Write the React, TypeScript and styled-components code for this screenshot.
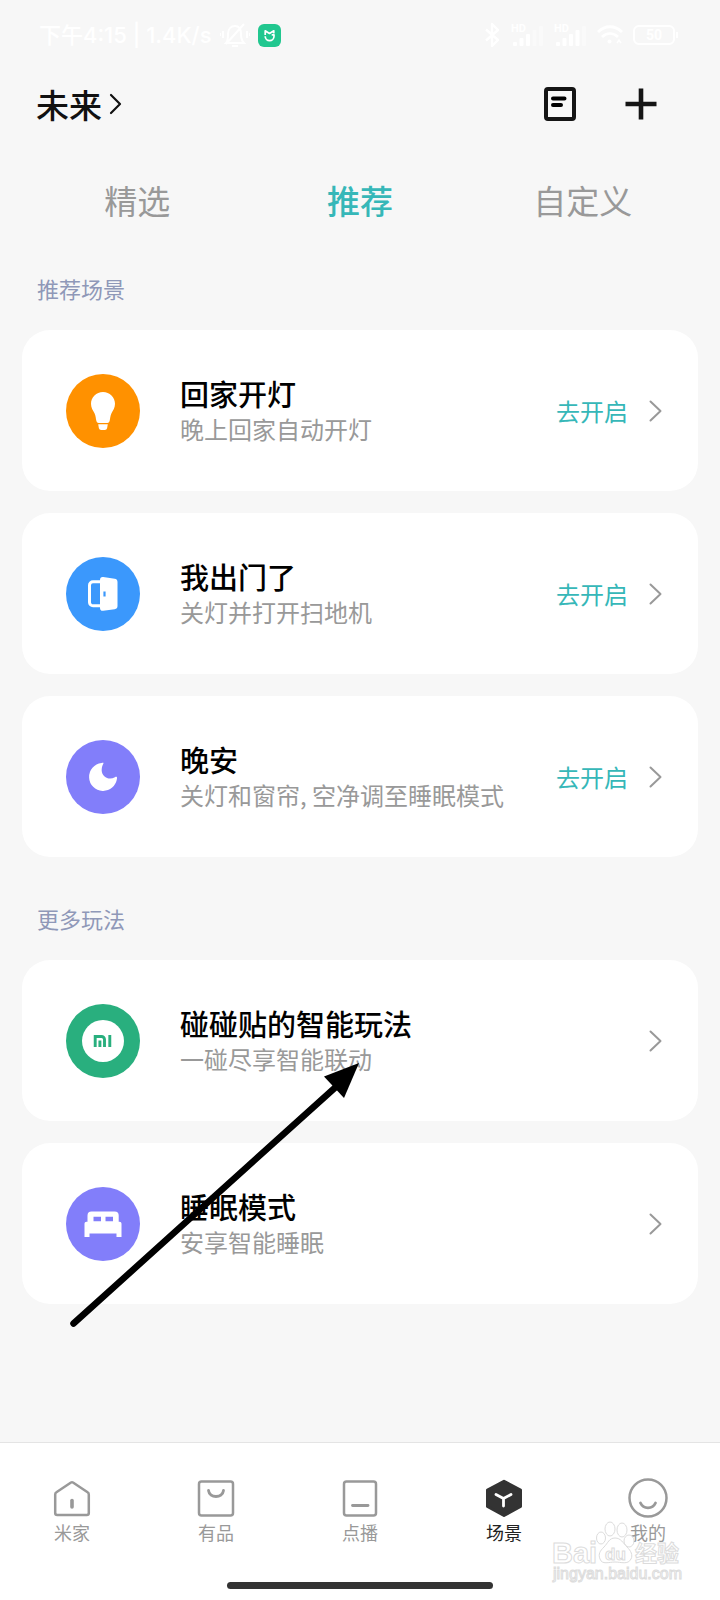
import React from "react";
import styled, { createGlobalStyle } from "styled-components";

const GlobalStyle = createGlobalStyle`
  * { box-sizing: border-box; }
  body {
    margin: 0;
    background: #f7f7f7;
    font-family: "Noto Sans CJK SC", sans-serif;
  }
  button { font: inherit; color: inherit; background: none; border: 0; padding: 0; cursor: pointer; }
  a { color: inherit; text-decoration: none; }
  svg { display: block; flex: none; }
`;

const Page = styled.div`
  min-height: 100vh;
  display: flex;
  flex-direction: column;
`;

const StatusBar = styled.div`
  height: 70px;
  padding: 0 41px 0 39px;
  display: flex;
  align-items: center;
  justify-content: space-between;
  color: #fff;
  font-size: 22px;
`;

const StatusGroup = styled.div<{ $gap: number }>`
  display: flex;
  align-items: center;
  gap: ${(p) => p.$gap}px;
`;

const StatusText = styled.span`
  font-family: Inter, "Noto Sans CJK SC", sans-serif;
  font-weight: 500;
  line-height: 30px;
  white-space: nowrap;
`;

const Header = styled.header`
  height: 68px;
  padding: 0 63px 0 36px;
  display: flex;
  align-items: center;
  justify-content: space-between;
`;

const HomeButton = styled.button`
  display: flex;
  align-items: center;
  gap: 7px;
  color: #111;
  font-size: 33px;
  font-weight: 500;
  line-height: 40px;
`;

const HeaderActions = styled.div`
  display: flex;
  align-items: center;
  gap: 49px;
`;

const Tabs = styled.nav`
  display: flex;
  padding: 37px 26px 2px;
`;

const Tab = styled.button<{ $active?: boolean }>`
  flex: 1;
  height: 50px;
  font-size: 33px;
  line-height: 50px;
  color: ${(p) => (p.$active ? "#36b7b8" : "#999")};
  font-weight: ${(p) => (p.$active ? 500 : 400)};
`;

const Main = styled.main`
  flex: 1;
  padding: 0 22px;
`;

const SectionTitle = styled.h2`
  margin: 0;
  padding: 46px 15px 27px;
  font-size: 22px;
  line-height: 30px;
  font-weight: 400;
  color: #8f98b8;
`;

const CardList = styled.div`
  position: relative;
  display: flex;
  flex-direction: column;
  gap: 22px;
`;

const Card = styled.a`
  min-height: 161px;
  padding: 0 36px 0 44px;
  display: flex;
  align-items: center;
  background: #fff;
  border-radius: 28px;
`;

const Badge = styled.span<{ $color: string }>`
  width: 74px;
  height: 74px;
  margin-right: 40px;
  border-radius: 50%;
  background: ${(p) => p.$color};
  flex: none;
`;

const CardText = styled.span`
  flex: 1;
  display: flex;
  flex-direction: column;
`;

const CardTitle = styled.strong`
  font-size: 29px;
  line-height: 36px;
  font-weight: 500;
  color: #000;
`;

const CardNote = styled.span`
  font-size: 24px;
  line-height: 36px;
  color: #999;
`;

const CardAction = styled.span`
  margin-right: 21px;
  font-size: 24px;
  line-height: 36px;
  color: #36b7b8;
`;

const Pointer = styled.svg`
  position: absolute;
  left: 44px;
  top: 96px;
  pointer-events: none;
`;

const BottomBar = styled.footer`
  position: relative;
  height: 158px;
  border-top: 1px solid #e4e4e4;
  background: #fff;
  display: flex;
  flex-direction: column;
  justify-content: space-between;
  align-items: center;
  padding: 35px 0 11px;
`;

const NavRow = styled.nav`
  width: 100%;
  display: flex;
`;

const NavItem = styled.a<{ $active?: boolean }>`
  flex: 1;
  display: flex;
  flex-direction: column;
  align-items: center;
  font-size: 18px;
  line-height: 28px;
  color: ${(p) => (p.$active ? "#222" : "#999")};
`;

const HomeIndicator = styled.div`
  width: 37%;
  height: 7px;
  border-radius: 4px;
  background: #333;
`;

const Watermark = styled.svg`
  position: absolute;
  right: 36px;
  bottom: 4px;
  pointer-events: none;
`;

const Chevron = () => (
  <svg width="13" height="22" viewBox="0 0 13 22" fill="none" stroke="#999" strokeWidth="2">
    <path d="M1.500 1.500 11.500 11 1.500 20.500" strokeLinecap="round" strokeLinejoin="round" />
  </svg>
);

const HomeChevron = () => (
  <svg width="13" height="22" viewBox="0 0 13 22" fill="none" stroke="#111" strokeWidth="2.200">
    <path d="M2 2 11 11 2 20" strokeLinecap="round" strokeLinejoin="round" />
  </svg>
);

const MuteIcon = () => (
  <svg width="30" height="28" viewBox="0 0 30 28" fill="none" stroke="#fff" strokeWidth="2">
    <path d="M6 22h18c-2-2-3-4-3-9 0-5-2-8-6-8s-7 3-7 8c0 5 0 7-2 9ZM12 25h6M24 3 6 23M3 10v7M27 10v7M0 12v3M30 12v3" />
  </svg>
);

const MiHomeLogo = () => (
  <svg width="23" height="23" viewBox="0 0 23 23">
    <rect width="23" height="23" rx="6" fill="#21c78f" />
    <path
      d="M7.200 11V6.800l4.300 2.700 4.300-2.700v2.700M7.200 12.300a4.400 4.400 0 0 0 8.800 0v-1.500h-2.300"
      fill="none"
      stroke="#fff"
      strokeWidth="1.700"
      strokeLinejoin="round"
    />
  </svg>
);

const BluetoothIcon = () => (
  <svg width="17" height="26" viewBox="0 0 17 26" fill="none" stroke="#fff" strokeWidth="2.400">
    <path d="M2 7.500 14 18l-6 6V2l6 6L2 18.500" strokeLinejoin="round" />
  </svg>
);

const SignalIcon = ({ bars }: { bars: number }) => (
  <svg width="33" height="24" viewBox="0 0 33 24" fill="#fff">
    <text x="0" y="9" fontSize="11" fontWeight="700" fontFamily="Roboto, sans-serif">HD</text>
    {[0, 1, 2, 3, 4].map((i) => (
      <rect
        key={i}
        x={2 + i * 6.5}
        y={19 - i * 4}
        width="4"
        height={4 + i * 4}
        rx="1"
        opacity={i < bars ? 1 : 0.4}
      />
    ))}
  </svg>
);

const WifiIcon = () => (
  <svg width="26" height="24" viewBox="0 0 26 24" fill="none" stroke="#fff" strokeWidth="2.800">
    <path d="M1 9c7-7 17-7 24 0M5 14c5-4.500 11-4.500 16 0" />
    <circle cx="12.500" cy="18.500" r="2" fill="#fff" stroke="none" />
    <path d="m20 20 2-3 2 3" strokeWidth="1.500" />
  </svg>
);

const BatteryIcon = () => (
  <svg width="46" height="20" viewBox="0 0 46 20">
    <rect x="1" y="1" width="40" height="18" rx="5" fill="none" stroke="#fff" strokeWidth="2" />
    <path d="M44 7v6" stroke="#fff" strokeWidth="2" />
    <text x="21" y="15" fontSize="14" fontWeight="700" fill="#fff" textAnchor="middle" fontFamily="Roboto, sans-serif">50</text>
  </svg>
);

const LogIcon = () => (
  <svg width="32" height="34" viewBox="0 0 32 34" fill="none" stroke="#151515">
    <rect x="2" y="2" width="28" height="30" rx="2" strokeWidth="4" />
    <path d="M9 11.500h11.500M9 18h8" stroke="#000" strokeWidth="4" strokeLinecap="round" />
  </svg>
);

const PlusIcon = () => (
  <svg width="32" height="32" viewBox="0 0 32 32" stroke="#151515" strokeWidth="4.600">
    <path d="M.5 16h31M16 .5v31" />
  </svg>
);

const BulbArt = () => (
  <svg width="74" height="74" viewBox="0 0 74 74" fill="#fff">
    <path d="M37 18c-6.700 0-12 5.200-12 11.800 0 4.200 1.900 6.500 3.500 9.500 1.300 2.500 1.300 5.500 1.900 7.800.3 1.200 1.100 1.900 2.300 1.900h8.600c1.200 0 2-.7 2.300-1.900.6-2.300.6-5.300 1.900-7.800 1.600-3 3.500-5.300 3.500-9.500C49 23.200 43.700 18 37 18Z" />
    <path d="M32.200 50.200h9.600l-.7 4a2.300 2.300 0 0 1-2.300 1.800h-3.600a2.300 2.300 0 0 1-2.300-1.800Z" />
  </svg>
);

const DoorArt = () => (
  <svg width="74" height="74" viewBox="0 0 74 74">
    <path d="M35 24.800h-8a3.500 3.500 0 0 0-3.500 3.500v17a3.500 3.500 0 0 0 3.500 3.500h8" fill="none" stroke="#fff" strokeWidth="3" />
    <path d="M34 23c0-2 1.200-3.200 3.200-2.900l11.500 1.700c1.900.3 2.800 1.400 2.800 3.200v24c0 1.800-.9 2.900-2.800 3.200l-11.500 1.600c-2 .3-3.200-.8-3.200-2.800Z" fill="#fff" />
    <path d="M38.500 34.500v5" stroke="#3b98fc" strokeWidth="2.200" />
  </svg>
);

const MoonArt = () => (
  <svg width="74" height="74" viewBox="0 0 74 74">
    <path d="M37.500 23.200c-2.800 5.200-2.200 10.200.8 13 3 2.700 7 3 10.600 1 1.600-.8 2.400-.2 2.100 1.400A14 14 0 1 1 35.500 23c1.500-.2 2.200-.2 2 .2Z" fill="#fff" />
  </svg>
);

const MiArt = () => (
  <svg width="74" height="74" viewBox="0 0 74 74">
    <circle cx="37" cy="37" r="21" fill="#fff" />
    <path d="M29.200 43V32.500h6.300a3 3 0 0 1 3 3V43M33.900 36.500V43M43.800 31v12" fill="none" stroke="#29af7e" strokeWidth="2.900" />
  </svg>
);

const BedArt = () => (
  <svg width="74" height="74" viewBox="0 0 74 74" fill="#fff">
    <path
      fillRule="evenodd"
      d="M25.500 24.500h23.200a4 4 0 0 1 4 4v6.300h.8c1.200 0 2 .8 2 2v13.200h-5v-3.500h-27V50h-5V36.800c0-1.200.8-2 2-2h1v-6.300a4 4 0 0 1 4-4ZM27.500 29.800v4.500h7.500v-4.500ZM39.500 29.800v4.500H47v-4.500Z"
    />
  </svg>
);

const NavIcon = ({ children }: { children: React.ReactNode }) => (
  <svg width="40" height="40" viewBox="0 0 40 40" fill="none" stroke="#999" strokeWidth="2.500" strokeLinecap="round" strokeLinejoin="round">
    {children}
  </svg>
);

const recommended = [
  { title: "回家开灯", note: "晚上回家自动开灯", color: "#ff9100", art: <BulbArt /> },
  { title: "我出门了", note: "关灯并打开扫地机", color: "#3b98fc", art: <DoorArt /> },
  { title: "晚安", note: "关灯和窗帘, 空净调至睡眠模式", color: "#827efa", art: <MoonArt /> },
];

const more = [
  { title: "碰碰贴的智能玩法", note: "一碰尽享智能联动", color: "#29af7e", art: <MiArt /> },
  { title: "睡眠模式", note: "安享智能睡眠", color: "#827efa", art: <BedArt /> },
];

const navItems = [
  {
    label: "米家",
    icon: (
      <>
        <path d="M3.200 16.500c0-1 .4-1.700 1.200-2.200L19 4.500c.7-.4 1.300-.4 2 0l14.600 9.800c.8.500 1.200 1.200 1.200 2.200V35c0 1.200-.8 2-2 2H5.200c-1.200 0-2-.8-2-2Z" />
        <path d="M20 22.500v6.500" strokeWidth="3.600" />
      </>
    ),
  },
  {
    label: "有品",
    icon: (
      <>
        <rect x="3" y="3.500" width="34" height="34" rx="2.500" />
        <path d="M12.500 12.500c1 8 14 8 15 0" strokeWidth="2.800" />
      </>
    ),
  },
  {
    label: "点播",
    icon: (
      <>
        <rect x="4" y="3.500" width="32" height="34" rx="2.500" />
        <path d="M12.500 27.500h15.500" strokeWidth="2.800" />
      </>
    ),
  },
  {
    label: "场景",
    active: true,
    icon: (
      <>
        <path d="M20 3.200 36.500 12v16.500L20 37.500 3.500 28.500V12Z" fill="#333" stroke="#333" strokeWidth="3" />
        <path d="m12 16.500 7.500 4L27 16.500M19.500 20.500V28" stroke="#fff" strokeWidth="2.800" />
      </>
    ),
  },
  {
    label: "我的",
    icon: (
      <>
        <circle cx="20" cy="20" r="18.500" />
        <path d="M12.500 25c3 6.500 12 6.500 15 0" strokeWidth="2.800" />
      </>
    ),
  },
];

export default function App() {
  return (
    <Page>
      <GlobalStyle />
      <StatusBar>
        <StatusGroup $gap={8}>
          <StatusText>下午4:15 | 1.4K/s</StatusText>
          <MuteIcon />
          <MiHomeLogo />
        </StatusGroup>
        <StatusGroup $gap={10}>
          <BluetoothIcon />
          <SignalIcon bars={3} />
          <SignalIcon bars={4} />
          <WifiIcon />
          <BatteryIcon />
        </StatusGroup>
      </StatusBar>
      <Header>
        <HomeButton>
          未来
          <HomeChevron />
        </HomeButton>
        <HeaderActions>
          <button aria-label="日志"><LogIcon /></button>
          <button aria-label="添加"><PlusIcon /></button>
        </HeaderActions>
      </Header>
      <Tabs>
        <Tab>精选</Tab>
        <Tab $active>推荐</Tab>
        <Tab>自定义</Tab>
      </Tabs>
      <Main>
        <section>
          <SectionTitle>推荐场景</SectionTitle>
          <CardList>
            {recommended.map((c) => (
              <Card href="#" key={c.title}>
                <Badge $color={c.color}>{c.art}</Badge>
                <CardText>
                  <CardTitle>{c.title}</CardTitle>
                  <CardNote>{c.note}</CardNote>
                </CardText>
                <CardAction>去开启</CardAction>
                <Chevron />
              </Card>
            ))}
          </CardList>
        </section>
        <section>
          <SectionTitle>更多玩法</SectionTitle>
          <CardList>
            {more.map((c) => (
              <Card href="#" key={c.title}>
                <Badge $color={c.color}>{c.art}</Badge>
                <CardText>
                  <CardTitle>{c.title}</CardTitle>
                  <CardNote>{c.note}</CardNote>
                </CardText>
                <Chevron />
              </Card>
            ))}
            <Pointer width="300" height="280" viewBox="0 0 300 280" aria-hidden="true">
              <path d="M7.500 267.500 272 29" stroke="#000" strokeWidth="6.500" strokeLinecap="round" />
              <path d="M293 7 258 20.500 278 42Z" />
            </Pointer>
          </CardList>
        </section>
      </Main>
      <BottomBar>
        <NavRow>
          {navItems.map((n) => (
            <NavItem href="#" key={n.label} $active={n.active}>
              <NavIcon>{n.icon}</NavIcon>
              {n.label}
            </NavItem>
          ))}
        </NavRow>
        <HomeIndicator />
        <Watermark width="136" height="76" viewBox="0 0 136 76" fill="#fff" stroke="#dcdcdc" strokeWidth="1">
          <g fontFamily="Liberation Sans, Noto Sans CJK SC, sans-serif" fontWeight="700">
            <text x="4" y="43" fontSize="29">Bai</text>
            <ellipse cx="53" cy="18" rx="4.500" ry="6" />
            <ellipse cx="62" cy="9" rx="5" ry="7" />
            <ellipse cx="74" cy="10" rx="5" ry="7" />
            <ellipse cx="81" cy="21" rx="5" ry="6" />
            <path d="M67 18c6 0 8 5 12 9s6 8 4 12c-3 6-10 3-16 3s-13 3-15-3c-2-5 0-8 4-12s5-9 11-9Z" />
            <text x="57" y="40" fontSize="17">du</text>
            <text x="87" y="41" fontSize="22">经验</text>
            <text x="5" y="59" fontSize="16" fontWeight="400">jingyan.baidu.com</text>
          </g>
        </Watermark>
      </BottomBar>
    </Page>
  );
}
